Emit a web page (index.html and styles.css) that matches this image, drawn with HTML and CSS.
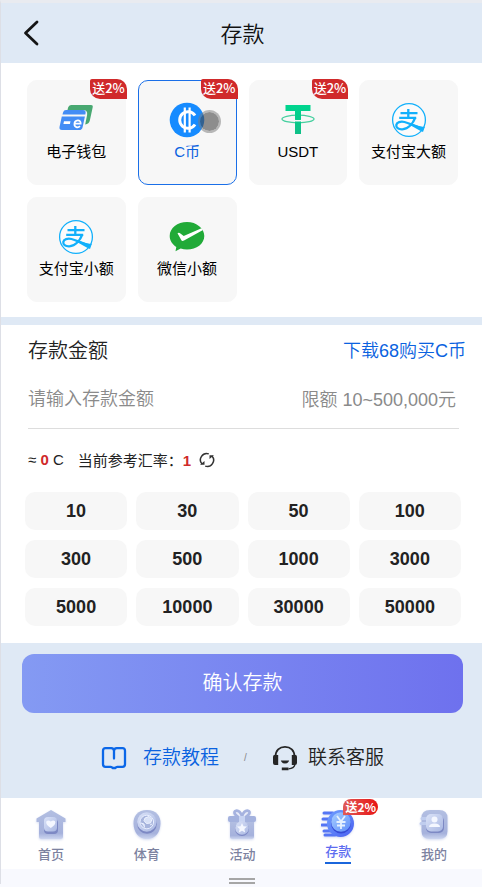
FILE: index.html
```html
<!DOCTYPE html>
<html lang="zh-CN">
<head>
    <meta charset="UTF-8">
    <meta name="viewport" content="width=device-width, initial-scale=1.0">
    <title>存款</title>
    <link rel="stylesheet" href="styles.css">
</head>
<body>
    <!-- shared gradients and symbols -->
    <svg class="defs" width="0" height="0" aria-hidden="true">
        <defs>
            <linearGradient id="navGrey" x1="0" y1="0" x2="0" y2="1">
                <stop offset="0" stop-color="#b3bfe2"/>
                <stop offset=".8" stop-color="#a5b1dc"/>
                <stop offset="1" stop-color="#ccd5ef"/>
            </linearGradient>
            <linearGradient id="navLight" x1="0" y1="0" x2="1" y2="1">
                <stop offset="0" stop-color="#dbe3f8"/>
                <stop offset="1" stop-color="#a9b7e2"/>
            </linearGradient>
            <linearGradient id="navBlue" x1="0" y1="0" x2="1" y2="1">
                <stop offset="0" stop-color="#6fa0ff"/>
                <stop offset="1" stop-color="#4a5ff0"/>
            </linearGradient>
            <linearGradient id="coinBlue" x1="0" y1="0" x2="1" y2="1">
                <stop offset="0" stop-color="#a9d0ff"/>
                <stop offset="1" stop-color="#5e8dfa"/>
            </linearGradient>
            <linearGradient id="tether" x1="0" y1="0" x2="0" y2="1">
                <stop offset="0" stop-color="#00d68f"/>
                <stop offset="1" stop-color="#0fbf87"/>
            </linearGradient>
            <symbol id="alipay" viewBox="0 0 36 36">
                <circle cx="18" cy="18" r="16.4" fill="#fff" fill-opacity=".5" stroke="#12b0fb" stroke-width="1.3"/>
                <path d="M9.500 11.200h17M8.200 15.800h17M17.300 7v9" fill="none" stroke="#12b0fb" stroke-width="2.300"/>
                <path d="M24.300 15.500c-2 5.200-6.500 11.500-13 11.800-4.200.2-6.300-1.900-6-4.300.4-2.700 4.200-3.900 8.200-3 5.400 1.200 10.300 4.700 19 6.700" fill="none" stroke="#12b0fb" stroke-width="2.300"/>
                <path d="M19.500 21.500c4.500 1.300 8.500 3 14.300 3.400l-1.800 5c-4.500-1.600-8.500-4.200-12.500-6.900z" fill="#12b0fb"/>
            </symbol>
        </defs>
    </svg>

    <div class="page">
        <header class="header">
            <button class="back" aria-label="返回">
                <svg width="18" height="28" viewBox="0 0 18 28"><path d="M15 3 3.500 14 15 25" fill="none" stroke="#151515" stroke-width="2.800" stroke-linecap="round" stroke-linejoin="round"/></svg>
            </button>
            <h1>存款</h1>
        </header>

        <main>
            <section class="methods">
                <button class="method">
                    <svg class="method-icon" viewBox="0 0 36 36">
                        <path d="M13 3h20q2.200 0 1.700 2.200l-2.800 13q-.9 3.800-4.700 4.300l1.900-9.500q.8-5-4.200-5H9.500l.6-2.500Q10.800 3 13 3z" fill="#48a871"/>
                        <path d="M8 8h17q3 0 2.600 3l-.3 1.500H4.500l.6-2.300Q5.800 8 8 8zM3.800 14.500h23.100l-2.300 10.700q-.6 2.800-3.400 2.800H4q-3 0-2.500-3z" fill="#438df5"/>
                        <path d="M6 19.200h6.500l-.6 2.800H5.400z" fill="#fff"/>
                        <path d="M17.200 21.700h5.500c.3-4.800-6.100-4.200-6.300.3-.1 3.300 3.400 4.300 5.600 2.200" fill="none" stroke="#fff" stroke-width="1.700"/>
                    </svg>
                    <span>电子钱包</span>
                    <em class="badge">送2%</em>
                </button>
                <button class="method active">
                    <svg class="method-icon" viewBox="0 0 36 36">
                        <circle cx="18" cy="18" r="17.300" fill="#168bff"/>
                        <path d="M26 13.500A8.300 8.300 0 1 0 26 22.500" fill="none" stroke="#fff" stroke-width="3"/>
                        <path d="M15.800 5.500v25M20.600 5.500v25" fill="none" stroke="#fff" stroke-width="2.200"/>
                    </svg>
                    <span>C币</span>
                    <em class="badge">送2%</em>
                    <i class="touch"></i>
                </button>
                <button class="method">
                    <svg class="method-icon" viewBox="0 0 36 36">
                        <ellipse cx="18" cy="17" rx="16" ry="3.800" fill="none" stroke="#46cf9f" stroke-width="1.300"/>
                        <path d="M5.500 3h25v6H21v23h-6V9H5.500z" fill="url(#tether)"/>
                        <path d="M14 18.500q4 .6 8 0" fill="none" stroke="#f7f7f7" stroke-width="1.500"/>
                    </svg>
                    <span>USDT</span>
                    <em class="badge">送2%</em>
                </button>
                <button class="method">
                    <svg class="method-icon"><use href="#alipay"/></svg>
                    <span>支付宝大额</span>
                </button>
                <button class="method">
                    <svg class="method-icon"><use href="#alipay"/></svg>
                    <span>支付宝小额</span>
                </button>
                <button class="method">
                    <svg class="method-icon" viewBox="0 0 36 36">
                        <path d="M18 3C8.500 3 .7 9 .7 17c0 4.700 2.600 8.400 6.600 11L6.500 32.300l5.200-2.700c2 .7 4.100 1 6.300 1 9.600 0 17.300-6 17.300-13.600S27.600 3 18 3z" fill="#21aa38"/>
                        <path d="M8.500 14.200q1-1 2.200-.2l4 3L32.500 9.200l1.500 1.700L15 21.500q-2 1.100-2.900-.8z" fill="#fff"/>
                    </svg>
                    <span>微信小额</span>
                </button>
            </section>

            <section class="amount">
                <div class="amount-head">
                    <label for="amount">存款金额</label>
                    <a href="#">下载68购买C币</a>
                </div>
                <div class="amount-field">
                    <input id="amount" type="text" inputmode="decimal" placeholder="请输入存款金额">
                    <span>限额 10~500,000元</span>
                </div>
                <div class="rate">
                    <span>≈ <b>0</b> C</span>
                    <span>当前参考汇率：<b>1</b></span>
                    <button class="refresh" aria-label="刷新汇率">
                        <svg width="16" height="16" viewBox="0 0 16 16">
                            <path d="M9.800 1.900A6.300 6.300 0 0 0 3 12M6.200 14.100A6.300 6.300 0 0 0 13 4" fill="none" stroke="#333" stroke-width="1.500"/>
                            <path d="M1 12.800h4.500V8.900zM15 3.200h-4.500v3.900z" fill="#333"/>
                        </svg>
                    </button>
                </div>
                <div class="quick">
                    <button>10</button>
                    <button>30</button>
                    <button>50</button>
                    <button>100</button>
                    <button>300</button>
                    <button>500</button>
                    <button>1000</button>
                    <button>3000</button>
                    <button>5000</button>
                    <button>10000</button>
                    <button>30000</button>
                    <button>50000</button>
                </div>
            </section>

            <section class="actions">
                <button class="confirm">确认存款</button>
                <div class="help">
                    <a class="guide" href="#">
                        <svg width="26" height="24" viewBox="0 0 26 24"><path d="M13 12.500V5q0-2.800-2.800-2.800H4.500Q2 2.200 2 4.700v13.600q0 2.500 2.500 2.500h5.200q1.300 0 1.900 1.200h2.800q.6-1.200 1.900-1.200h5.200q2.500 0 2.500-2.500V4.700q0-2.500-2.500-2.500h-5.700Q13 2.200 13 5" fill="none" stroke="#0b67e8" stroke-width="2.300" stroke-linecap="round" stroke-linejoin="round"/></svg>
                        <span>存款教程</span>
                    </a>
                    <i class="slash">/</i>
                    <a class="service" href="#">
                        <svg width="26" height="26" viewBox="0 0 26 26">
                            <path d="M3.500 11.500C3.500 5.500 7.500 1.800 13 1.800s9.500 3.700 9.500 9.700" fill="none" stroke="#262626" stroke-width="1.800"/>
                            <path d="M2 10h4.200v10H3Q1 20 1 18v-6q0-1.500 1-2zM24 10h-4.200v10H23q2 0 2-2v-6q0-1.500-1-2zM8.800 15.500h8.400q-1 3-4.200 3t-4.200-3zM9.800 22.500h6.700v2.800H9.800z" fill="#262626"/>
                            <path d="M23 19.500q-1 4-6.500 4.300" fill="none" stroke="#262626" stroke-width="1.200"/>
                        </svg>
                        <span>联系客服</span>
                    </a>
                </div>
            </section>
        </main>

        <nav class="tabbar">
            <a href="#">
                <svg class="tab-icon" viewBox="0 0 34 34">
                    <path d="M17 2 31.500 10.500v3.500H29v14.500q0 2.500-2.500 2.500h-19Q5 31 5 28.500V14H2.500v-3.500z" fill="url(#navGrey)"/>
                    <rect x="10" y="11" width="14" height="15" rx="4" fill="#7d89c4"/>
                    <rect x="10" y="9" width="13" height="14.500" rx="4" fill="url(#navLight)"/>
                    <path d="M16.800 20c-8-5-3.800-9.500 0-6.500 3.800-3 8 1.500 0 6.500z" fill="#f4f7ff"/>
                </svg>
                <span>首页</span>
            </a>
            <a href="#">
                <svg class="tab-icon" viewBox="0 0 34 34">
                    <path d="M17 2c9 0 14 6 13.500 14S26 31 17 31 4 24 3.500 16 8 2 17 2z" fill="url(#navGrey)"/>
                    <circle cx="17" cy="16" r="9.800" fill="#7d89c4"/>
                    <circle cx="16.800" cy="14" r="9.700" fill="url(#navLight)"/>
                    <circle cx="16.800" cy="14" r="6.800" fill="#a8b5dd" stroke="#e8eeff"/>
                    <path d="m15 10 4-1.500 3 2.800-1.500 3.700-4 .5-2.500-2.800zM11 15l3 1 .5 3.500M20 17l2-1" fill="#d8e1f7" stroke="#edf2ff"/>
                </svg>
                <span>体育</span>
            </a>
            <a href="#">
                <svg class="tab-icon" viewBox="0 0 34 34">
                    <path d="M17 10C10 9 7.500 3.500 11 2.800S17 8 17 8s2.500-6 6-5.200S24 9 17 10z" fill="none" stroke="#a5b2df" stroke-width="2.700"/>
                    <path d="M5 13h24v15.500q0 2.500-2.500 2.500h-19Q5 31 5 28.500z" fill="url(#navGrey)"/>
                    <rect x="3" y="8" width="28" height="6" rx="2" fill="#a4b2de"/>
                    <path d="M14 8h6v6h-6z" fill="#c7d3f2"/>
                    <circle cx="17" cy="21" r="7" fill="#7d89c4"/>
                    <circle cx="17" cy="20" r="6.800" fill="url(#navLight)"/>
                    <path d="m17 15 1.500 3.200 3.500.4-2.600 2.400.7 3.500-3.100-1.700-3.100 1.700.7-3.500-2.600-2.400 3.500-.4z" fill="#f4f7ff"/>
                </svg>
                <span>活动</span>
            </a>
            <a class="current" href="#">
                <svg class="tab-icon" viewBox="0 0 34 34">
                    <path d="M3 7h9M2 13h9M1 19h9M3 25h8M4 29h10" stroke="#5475f5" stroke-width="3" stroke-linecap="round"/>
                    <circle cx="19.500" cy="17.500" r="13.500" fill="url(#navBlue)"/>
                    <circle cx="20" cy="17.500" r="10" fill="#344ad5"/>
                    <circle cx="20" cy="16" r="9.800" fill="url(#coinBlue)"/>
                    <path d="m16 10 4 5.500 4-5.500M20 15.500V23M15.500 16h9M16 19.500h8" fill="none" stroke="#e5f1ff" stroke-width="1.800"/>
                </svg>
                <span>存款</span>
                <em class="tab-badge">送2%</em>
            </a>
            <a href="#">
                <svg class="tab-icon" viewBox="0 0 34 34">
                    <path d="M13 2h9q8.500 0 8.500 8v13q0 8-8.500 8h-9q-8.500 0-8.500-8V10Q4.500 2 13 2z" fill="url(#navGrey)"/>
                    <path d="M5 10.500h6M4 15.500h6" stroke="#c0cdee" stroke-width="3" stroke-linecap="round"/>
                    <rect x="9" y="8" width="18" height="17" rx="5" fill="#7d89c4"/>
                    <rect x="9" y="6" width="17" height="17.500" rx="5" fill="url(#navLight)"/>
                    <circle cx="17.500" cy="11.500" r="3" fill="#f4f7ff"/>
                    <path d="M12 19q0-3.500 5.500-3.500T23 19z" fill="#f4f7ff"/>
                </svg>
                <span>我的</span>
            </a>
        </nav>
        <div class="handle"><i></i></div>
    </div>
</body>
</html>
```
FILE: styles.css
```css
* {
    box-sizing: border-box;
}
body {
    margin: 0;
    background: #f8f9fe;
    font-family: "Liberation Sans", "Noto Sans CJK SC", sans-serif;
    font-weight: 350;
    color: #222;
}
button,
input {
    font: inherit;
    color: inherit;
    border: none;
    padding: 0;
    background: none;
}
button {
    cursor: pointer;
}
a {
    color: inherit;
    text-decoration: none;
}
em,
i {
    font-style: normal;
}
.defs {
    position: absolute;
}
.page {
    border-top: 3px solid #e9ebf0;
    border-left: 1px solid #dddfe6;
}

/* header */
.header {
    display: grid;
    grid-template-columns: 60px 1fr 58px;
    align-items: center;
    height: 60px;
    background: #dfe9f5;
    color: #111;
}
.header h1 {
    margin: 0;
    padding-bottom: 2px;
    font-size: 22px;
    font-weight: 350;
    text-align: center;
}
.back {
    display: flex;
    justify-content: center;
}

/* payment methods */
.methods {
    display: grid;
    grid-template-columns: repeat(4, 1fr);
    gap: 12px;
    padding: 17px 24px 15px 26px;
    background: #fff;
}
.method {
    position: relative;
    display: flex;
    flex-direction: column;
    align-items: center;
    gap: 2px;
    height: 105px;
    padding-top: 21px;
    border: 1px solid #f7f7f7;
    border-radius: 10px;
    background: #f7f7f7;
    color: #000;
    font-size: 15px;
    font-weight: 400;
    line-height: 24px;
    white-space: nowrap;
}
.method.active {
    border-color: #1a6fe8;
    color: #0a62e0;
}
.method-icon {
    width: 36px;
    height: 36px;
}
.badge {
    position: absolute;
    top: -2px;
    right: -2px;
    padding: 0 2px 2px;
    border-radius: 2px 10px 0 10px;
    background: #d02a2b;
    color: #fff;
    font-family: "Noto Sans CJK SC", sans-serif;
    font-size: 13px;
    font-weight: 500;
    line-height: 18px;
}
.touch {
    position: absolute;
    top: 29px;
    left: 59px;
    width: 23px;
    height: 23px;
    border: 2px solid rgba(120, 120, 120, 0.5);
    border-radius: 50%;
    background: rgba(70, 70, 70, 0.6);
    background-clip: padding-box;
}

/* amount */
.amount {
    border-top: 8px solid #dfe9f5;
    padding: 10px 21px 17px 24px;
    background: #fff;
}
.amount-head {
    display: flex;
    justify-content: space-between;
    align-items: center;
    margin: 0 -5px 0 3px;
    font-size: 20px;
    line-height: 32px;
}
.amount-head a {
    color: #0a62e0;
    font-size: 18px;
}
.amount-field {
    display: flex;
    align-items: center;
    height: 62px;
    margin: 0 2px 0 3px;
    padding-right: 3px;
    border-bottom: 1px solid #ddd;
    color: #8a8a8a;
    font-size: 18px;
}
.amount-field input {
    flex: 1;
    min-width: 0;
    padding-top: 4px;
    outline: none;
}
.amount-field input::placeholder {
    color: #8a8a8a;
}
.rate {
    display: flex;
    align-items: center;
    height: 63px;
    padding: 0 0 2px 3px;
    font-size: 15px;
    font-weight: 400;
    gap: 14px;
}
.rate b {
    color: #d02a2b;
}
.refresh {
    display: flex;
    margin-left: -6px;
}
.quick {
    display: grid;
    grid-template-columns: repeat(4, 1fr);
    gap: 10px 9px;
}
.quick button {
    height: 38px;
    border-radius: 10px;
    background: #f7f7f7;
    font-size: 18px;
    font-weight: bold;
}

/* confirm and help links */
.actions {
    padding: 11px 19px 25px 21px;
    background: #dfe9f5;
}
.confirm {
    display: block;
    width: 100%;
    height: 59px;
    padding-bottom: 4px;
    border-radius: 12px;
    background: linear-gradient(90deg, #849af3, #6e71ee);
    color: #fff;
    font-size: 20px;
}
.help {
    display: flex;
    justify-content: center;
    align-items: center;
    gap: 25px;
    margin-top: 30px;
    font-size: 19px;
    line-height: 30px;
}
.help a {
    display: flex;
    align-items: center;
    gap: 10px;
}
.help .guide {
    gap: 16px;
    color: #0a62e0;
}
.slash {
    color: #888;
    font-size: 10px;
}

/* bottom tabs */
.tabbar {
    display: grid;
    grid-template-columns: repeat(5, 1fr);
    height: 71px;
    padding-left: 2px;
    background: #fff;
    color: #7c82a0;
    font-size: 13px;
    font-weight: 500;
    line-height: 20px;
}
.tabbar a {
    position: relative;
    display: flex;
    flex-direction: column;
    align-items: center;
    gap: 3px;
    padding-top: 10px;
}
.tab-icon {
    width: 34px;
    height: 34px;
    filter: drop-shadow(0 1px 1px #d5dcf2);
}
.tabbar .current {
    gap: 2px;
    padding-top: 8px;
    color: #5d6cf0;
}
.current span {
    border-bottom: 2px solid #1a66dc;
}
.tab-badge {
    position: absolute;
    top: 1px;
    left: 53px;
    padding: 0 2px;
    border-radius: 8px 8px 8px 0;
    background: linear-gradient(90deg, #e05a56, #e81414);
    color: #fff;
    font-family: "Noto Sans CJK SC", sans-serif;
    font-size: 12px;
    font-weight: bold;
    line-height: 16px;
}

.handle {
    display: flex;
    justify-content: center;
    padding-top: 9px;
}
.handle i {
    width: 26px;
    height: 6px;
    border: solid #a6a6a6;
    border-width: 2px 0;
}
```
